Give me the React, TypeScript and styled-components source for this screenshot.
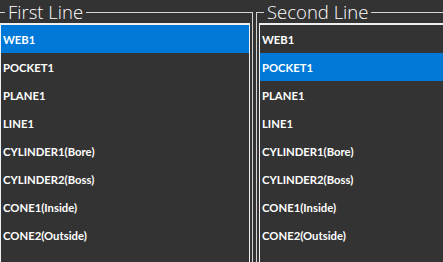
import styled, { createGlobalStyle } from "styled-components";

const GlobalStyle = createGlobalStyle`
  html, body {
    margin: 0;
    padding: 0;
    background: #333333;
    overflow: hidden;
  }
`;

const Page = styled.div`
  display: flex;
  gap: 3px;
  margin-left: -3px;
  width: 446px;
  height: 262px;
  overflow: hidden;
`;

const GroupBox = styled.fieldset`
  box-sizing: border-box;
  width: 256px;
  flex-shrink: 0;
  margin: 0;
  padding: 0 2px;
  border: 1px solid #d4d4d4;
  border-bottom: none;
  min-width: 0;
`;

const Title = styled.legend`
  margin-left: 5px;
  padding: 0 3px;
  font-family: "Open Sans", sans-serif;
  font-weight: 300;
  font-size: 18.5px;
  line-height: 24px;
  color: #ffffff;
`;

const ListBox = styled.div`
  display: flex;
  flex-direction: column;
  margin-top: -1px;
  border: 1px solid #f0f0f0;
  border-top-width: 2px;
  border-bottom: none;
  height: 260px;
`;

const Item = styled.div<{ $selected?: boolean }>`
  height: 28px;
  flex-shrink: 0;
  display: flex;
  align-items: center;
  padding-left: 2px;
  background: ${(p) => (p.$selected ? "#0078d7" : "transparent")};
  color: #ffffff;
  font-family: Lato, sans-serif;
  font-weight: bold;
  font-size: 11.3px;
`;

const items = [
  "WEB1",
  "POCKET1",
  "PLANE1",
  "LINE1",
  "CYLINDER1(Bore)",
  "CYLINDER2(Boss)",
  "CONE1(Inside)",
  "CONE2(Outside)",
];

const LineGroup = ({ title, selected }: { title: string; selected: number }) => (
  <GroupBox>
    <Title>{title}</Title>
    <ListBox>
      {items.map((name, index) => (
        <Item key={name} $selected={index === selected}>
          {name}
        </Item>
      ))}
    </ListBox>
  </GroupBox>
);

export default function App() {
  return (
    <>
      <GlobalStyle />
      <Page>
        <LineGroup title="First Line" selected={0} />
        <LineGroup title="Second Line" selected={1} />
      </Page>
    </>
  );
}
